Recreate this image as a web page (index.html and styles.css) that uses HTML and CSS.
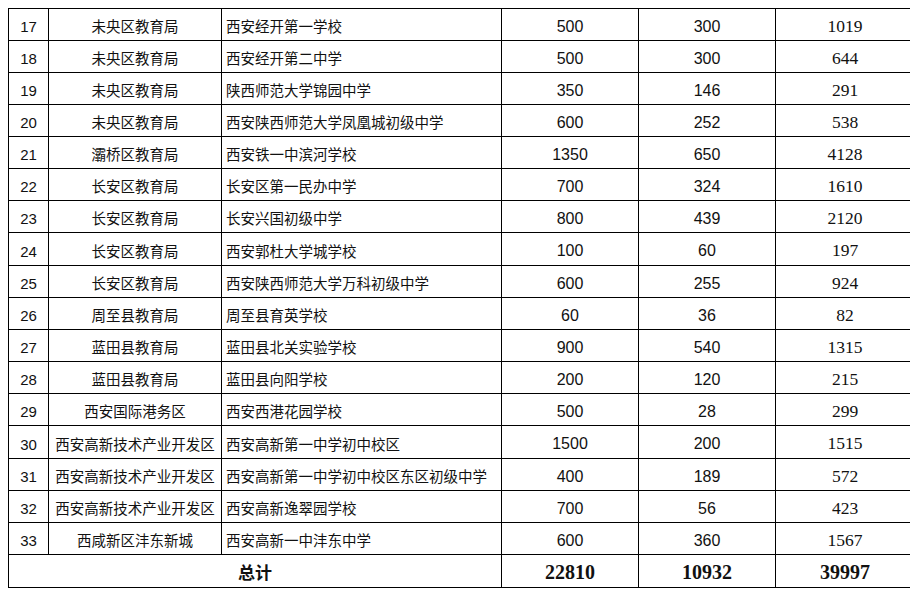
FILE: index.html
```html
<!DOCTYPE html>
<html lang="zh">
<head>
<meta charset="utf-8">
<link rel="stylesheet" href="styles.css">
</head>
<body>
<table class="tbl">
<colgroup>
<col class="c-no"><col class="c-dept"><col class="c-school"><col class="c-num"><col class="c-num"><col class="c-last">
</colgroup>
<tbody>
<tr><td class="no">17</td><td class="dept">未央区教育局</td><td class="school">西安经开第一学校</td><td class="sans">500</td><td class="sans">300</td><td class="serif">1019</td></tr>
<tr><td class="no">18</td><td class="dept">未央区教育局</td><td class="school">西安经开第二中学</td><td class="sans">500</td><td class="sans">300</td><td class="serif">644</td></tr>
<tr><td class="no">19</td><td class="dept">未央区教育局</td><td class="school">陕西师范大学锦园中学</td><td class="sans">350</td><td class="sans">146</td><td class="serif">291</td></tr>
<tr><td class="no">20</td><td class="dept">未央区教育局</td><td class="school">西安陕西师范大学凤凰城初级中学</td><td class="sans">600</td><td class="sans">252</td><td class="serif">538</td></tr>
<tr><td class="no">21</td><td class="dept">灞桥区教育局</td><td class="school">西安铁一中滨河学校</td><td class="sans">1350</td><td class="sans">650</td><td class="serif">4128</td></tr>
<tr><td class="no">22</td><td class="dept">长安区教育局</td><td class="school">长安区第一民办中学</td><td class="sans">700</td><td class="sans">324</td><td class="serif">1610</td></tr>
<tr><td class="no">23</td><td class="dept">长安区教育局</td><td class="school">长安兴国初级中学</td><td class="sans">800</td><td class="sans">439</td><td class="serif">2120</td></tr>
<tr class="tall"><td class="no">24</td><td class="dept">长安区教育局</td><td class="school">西安郭杜大学城学校</td><td class="sans">100</td><td class="sans">60</td><td class="serif">197</td></tr>
<tr><td class="no">25</td><td class="dept">长安区教育局</td><td class="school">西安陕西师范大学万科初级中学</td><td class="sans">600</td><td class="sans">255</td><td class="serif">924</td></tr>
<tr><td class="no">26</td><td class="dept">周至县教育局</td><td class="school">周至县育英学校</td><td class="sans">60</td><td class="sans">36</td><td class="serif">82</td></tr>
<tr><td class="no">27</td><td class="dept">蓝田县教育局</td><td class="school">蓝田县北关实验学校</td><td class="sans">900</td><td class="sans">540</td><td class="serif">1315</td></tr>
<tr><td class="no">28</td><td class="dept">蓝田县教育局</td><td class="school">蓝田县向阳学校</td><td class="sans">200</td><td class="sans">120</td><td class="serif">215</td></tr>
<tr><td class="no">29</td><td class="dept">西安国际港务区</td><td class="school">西安西港花园学校</td><td class="sans">500</td><td class="sans">28</td><td class="serif">299</td></tr>
<tr class="tall"><td class="no">30</td><td class="dept">西安高新技术产业开发区</td><td class="school">西安高新第一中学初中校区</td><td class="sans">1500</td><td class="sans">200</td><td class="serif">1515</td></tr>
<tr><td class="no">31</td><td class="dept">西安高新技术产业开发区</td><td class="school">西安高新第一中学初中校区东区初级中学</td><td class="sans">400</td><td class="sans">189</td><td class="serif">572</td></tr>
<tr><td class="no">32</td><td class="dept">西安高新技术产业开发区</td><td class="school">西安高新逸翠园学校</td><td class="sans">700</td><td class="sans">56</td><td class="serif">423</td></tr>
<tr><td class="no">33</td><td class="dept">西咸新区沣东新城</td><td class="school">西安高新一中沣东中学</td><td class="sans">600</td><td class="sans">360</td><td class="serif">1567</td></tr>
<tr class="total"><td class="total-label" colspan="3">总计</td><td class="total-num">22810</td><td class="total-num">10932</td><td class="total-num">39997</td></tr>
</tbody>
</table>
</body>
</html>
```

FILE: styles.css
```css
html, body {
  background: #ffffff;
}
body {
  margin: 8px;
  color: #111111;
  font-family: "Noto Sans CJK SC", "Noto Sans", sans-serif;
}
.tbl {
  border-collapse: collapse;
  table-layout: fixed;
  width: 906px;
}
.c-no { width: 40px; }
.c-dept { width: 173px; }
.c-school { width: 280px; }
.c-num { width: 137px; }
.c-last { width: 139px; }
.tbl td {
  border: 1px solid #000000;
  height: 32px;
  padding: 4px 0 0 0;
  box-sizing: border-box;
  text-align: center;
  vertical-align: middle;
  white-space: nowrap;
  line-height: 1;
}
.tbl tr.tall td {
  height: 33px;
}
.no {
  font-family: "Liberation Sans", Arial, sans-serif;
  font-size: 15px;
}
.dept {
  font-family: "Noto Sans CJK SC", sans-serif;
  font-size: 14.5px;
}
.tbl td.school {
  font-family: "Noto Sans CJK SC", sans-serif;
  font-size: 14.5px;
  text-align: left;
  padding-left: 4px;
}
.sans {
  font-family: "Liberation Sans", Arial, sans-serif;
  font-size: 16px;
}
.serif {
  font-family: "Liberation Serif", "Times New Roman", serif;
  font-size: 17.5px;
}
.tbl tr.total td {
  height: 33px;
  padding-top: 1px;
}
.total-label {
  font-family: "Noto Sans CJK SC", sans-serif;
  font-weight: 700;
  font-size: 17px;
}
.total-num {
  font-family: "Liberation Serif", "Times New Roman", serif;
  font-weight: 700;
  font-size: 20px;
}
```
